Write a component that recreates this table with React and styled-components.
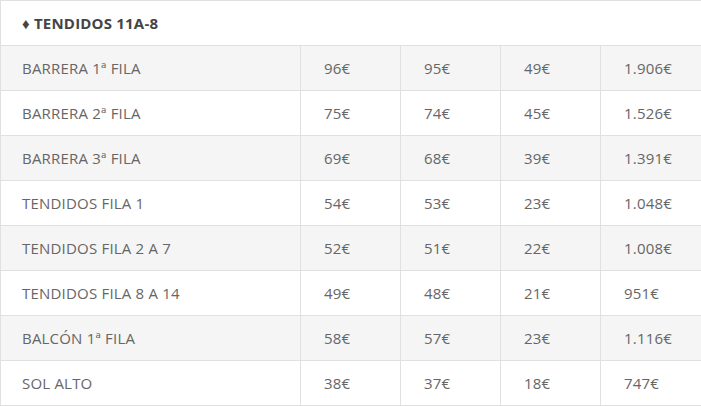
import React from 'react'
import styled, { createGlobalStyle } from 'styled-components'

const Global = createGlobalStyle`
    body {
        margin: 0;
        background: white;
        font-family: "Open Sans", "Liberation Sans", sans-serif;
    }
`

const PriceTable = styled.table`
    border-collapse: collapse;
    width: 702px;
    table-layout: fixed;
    font-size: 15px;
    color: #666;
`

const Col = styled.col`
    width: ${props => props.$w || 'auto'};
`

const HeadCell = styled.th`
    height: 44px;
    padding: 0 0 0 21px;
    text-align: left;
    font-weight: 700;
    color: #444;
    border: 1px solid #e0e0e0;
    letter-spacing: 0.2px;
`

const Row = styled.tr`
    background: ${props => props.$shaded ? '#f5f5f5' : 'white'};
`

const Cell = styled.td`
    height: 44px;
    padding: 0 0 0 ${props => props.$first ? '21px' : '23px'};
    border: 1px solid #e0e0e0;
    white-space: nowrap;
    letter-spacing: 0.2px;
`

const rows = [
    ['BARRERA 1ª FILA', '96€', '95€', '49€', '1.906€'],
    ['BARRERA 2ª FILA', '75€', '74€', '45€', '1.526€'],
    ['BARRERA 3ª FILA', '69€', '68€', '39€', '1.391€'],
    ['TENDIDOS FILA 1', '54€', '53€', '23€', '1.048€'],
    ['TENDIDOS FILA 2 A 7', '52€', '51€', '22€', '1.008€'],
    ['TENDIDOS FILA 8 A 14', '49€', '48€', '21€', '951€'],
    ['BALCÓN 1ª FILA', '58€', '57€', '23€', '1.116€'],
    ['SOL ALTO', '38€', '37€', '18€', '747€'],
]

const App = () => {
    return (
        <>
            <Global />
            <PriceTable>
                <colgroup>
                    <Col $w="300px" />
                    <Col $w="100px" />
                    <Col $w="100px" />
                    <Col $w="100px" />
                    <Col />
                </colgroup>
                <thead>
                    <tr>
                        <HeadCell colSpan={5}>♦ TENDIDOS 11A-8</HeadCell>
                    </tr>
                </thead>
                <tbody>
                    {rows.map((r, i) => (
                        <Row key={r[0]} $shaded={i % 2 === 0}>
                            {r.map((c, j) => (
                                <Cell key={j} $first={j === 0}>{c}</Cell>
                            ))}
                        </Row>
                    ))}
                </tbody>
            </PriceTable>
        </>
    )
}

export default App
